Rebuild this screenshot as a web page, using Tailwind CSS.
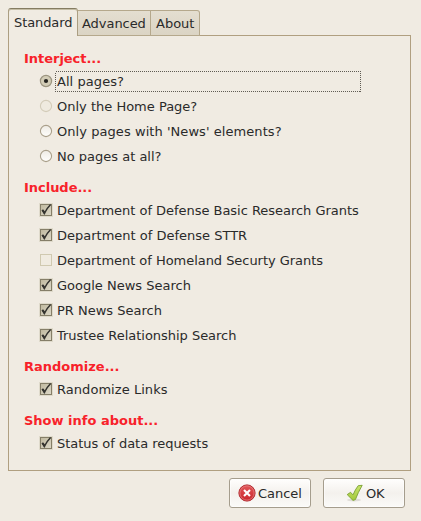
<!DOCTYPE html>
<html lang="en">
<head>
<meta charset="utf-8">
<title>Options</title>
<script src="https://cdn.jsdelivr.net/npm/@tailwindcss/browser@4"></script>
</head>
<body class="w-[421px] h-[521px] overflow-hidden bg-[#f0ebe2] font-['DejaVu_Sans',sans-serif] text-[13px] text-[#2a2a2a] pt-2 pl-2">
<svg class="absolute w-0 h-0">
  <defs>
    <linearGradient id="boxfill" x1="0" y1="0" x2="1" y2="1"><stop offset="0" stop-color="#bfb89e"/><stop offset="1" stop-color="#ddd8c8"/></linearGradient>
    <linearGradient id="dotfill" x1="0" y1="0" x2="0" y2="1"><stop offset="0" stop-color="#eeebe4"/><stop offset="1" stop-color="#fffefc"/></linearGradient>
    <linearGradient id="redfill" x1="0" y1="0" x2="0" y2="1"><stop offset="0" stop-color="#e2585b"/><stop offset="1" stop-color="#c9262c"/></linearGradient>
    <linearGradient id="greenfill" x1="0" y1="0" x2="0" y2="1"><stop offset="0" stop-color="#c8e46c"/><stop offset="1" stop-color="#a3c93a"/></linearGradient>
    <symbol id="checked" viewBox="0 0 14 14">
      <rect x=".5" y=".5" width="13" height="13" fill="none" stroke="#dfdacb"/>
      <rect x="1.5" y="1.5" width="11" height="11" fill="url(#boxfill)" stroke="#857e68"/>
      <path d="M3.2 7 L5.6 10 Q7.6 5.8 11.6 1.6" fill="none" stroke="#33322e" stroke-width="1.5"/>
      <path d="M2.6 7.3 L4.4 6.5 L6.2 8.9 L6 11.6 L5 11.6 Z" fill="#33322e"/>
    </symbol>
    <symbol id="unchecked" viewBox="0 0 14 14"><rect x="1.5" y="1.5" width="11" height="11" fill="#f0ebe0" stroke="#d0c9b0"/></symbol>
    <symbol id="radio-on" viewBox="0 0 14 14"><circle cx="7" cy="7" r="5.6" fill="#d2ccb6" stroke="#9c9580" stroke-width="1.2"/><circle cx="7" cy="7" r="2.1" fill="#24231f"/></symbol>
    <symbol id="radio-off" viewBox="0 0 14 14"><circle cx="7" cy="7" r="5.6" fill="url(#dotfill)" stroke="#aaa08b" stroke-width="1.1"/></symbol>
    <symbol id="radio-dim" viewBox="0 0 14 14"><circle cx="7" cy="7" r="5.6" fill="#efeadf" stroke="#d3ccb9" stroke-width="1.1"/></symbol>
  </defs>
</svg>

<div class="relative z-10 flex items-end h-7 -mb-px">
  <div class="w-[70px] h-7 rounded-t-[3px] border border-b-0 border-[#ab9e82] border-t-[#857c62] bg-[#f0ebe2] shadow-[inset_0_1px_0_#c5bda5] pl-[5px] leading-[27px] tracking-[-0.1px]">Standard</div>
  <div class="w-[73px] h-[26px] border border-l-0 border-[#b5a88c] bg-linear-to-b from-[#e4ded0] to-[#dbd4c4] pl-1 leading-[26px] tracking-[-0.05px]">Advanced</div>
  <div class="w-[49px] h-[26px] rounded-tr-[3px] border border-l-0 border-[#b5a88c] bg-linear-to-b from-[#e4ded0] to-[#dbd4c4] pl-[5px] leading-[26px]">About</div>
</div>

<main class="w-[403px] h-[436px] border border-[#b09f80] pl-[15px] pt-3">
  <h2 class="h-[21px] leading-[21px] font-bold text-[#f8222a] tracking-[-0.03px]">Interject...</h2>
  <div class="pl-[15px]">
    <div class="flex items-center h-[25px]"><svg class="w-[14px] h-[14px] mr-[2px] mb-px"><use href="#radio-on"/></svg>
      <div class="relative w-[306px] h-[21px] leading-[22px] pl-0.5 tracking-[0.06px]">All pages?
        <svg class="absolute inset-0 w-[306px] h-[21px]"><rect x=".5" y=".5" width="305" height="20" fill="none" stroke="#5f5b53" stroke-dasharray="1 1" shape-rendering="crispEdges"/></svg>
      </div></div>
    <div class="flex items-center h-[25px] gap-1"><svg class="w-[14px] h-[14px] mb-px"><use href="#radio-dim"/></svg>Only the Home Page?</div>
    <div class="flex items-center h-[25px] gap-1 tracking-[0.06px]"><svg class="w-[14px] h-[14px] mb-px"><use href="#radio-off"/></svg>Only pages with 'News' elements?</div>
    <div class="flex items-center h-[25px] gap-1"><svg class="w-[14px] h-[14px] mb-px"><use href="#radio-off"/></svg>No pages at all?</div>
  </div>
  <h2 class="mt-2 h-[21px] leading-[21px] font-bold text-[#f8222a] tracking-[-0.03px]">Include...</h2>
  <div class="pl-[15px]">
    <div class="flex items-center h-[25px] gap-1 tracking-[-0.03px]"><svg class="w-[14px] h-[14px] mb-px"><use href="#checked"/></svg>Department of Defense Basic Research Grants</div>
    <div class="flex items-center h-[25px] gap-1"><svg class="w-[14px] h-[14px] mb-px"><use href="#checked"/></svg>Department of Defense STTR</div>
    <div class="flex items-center h-[25px] gap-1 tracking-[-0.04px]"><svg class="w-[14px] h-[14px] mb-px"><use href="#unchecked"/></svg>Department of Homeland Securty Grants</div>
    <div class="flex items-center h-[25px] gap-1"><svg class="w-[14px] h-[14px] mb-px"><use href="#checked"/></svg>Google News Search</div>
    <div class="flex items-center h-[25px] gap-1"><svg class="w-[14px] h-[14px] mb-px"><use href="#checked"/></svg>PR News Search</div>
    <div class="flex items-center h-[25px] gap-1 tracking-[-0.03px]"><svg class="w-[14px] h-[14px] mb-px"><use href="#checked"/></svg>Trustee Relationship Search</div>
  </div>
  <h2 class="mt-2 h-[21px] leading-[21px] font-bold text-[#f8222a]">Randomize...</h2>
  <div class="pl-[15px]">
    <div class="flex items-center h-[25px] gap-1 tracking-[0.05px]"><svg class="w-[14px] h-[14px] mb-px"><use href="#checked"/></svg>Randomize Links</div>
  </div>
  <h2 class="mt-2 h-[21px] leading-[21px] font-bold text-[#f8222a]">Show info about...</h2>
  <div class="pl-[15px]">
    <div class="flex items-center h-[25px] gap-1 tracking-[-0.03px]"><svg class="w-[14px] h-[14px] mb-px"><use href="#checked"/></svg>Status of data requests</div>
  </div>
</main>

<div class="flex justify-end gap-3 pt-[7px] pr-4">
  <button class="flex items-center w-[82px] h-[30px] rounded-[3px] border border-[#a59d8d] shadow-[inset_0_0_0_1px_#fff8] bg-linear-to-b from-[#fffefd] from-0% via-[#f4f1ed] via-50% to-[#fbfaf8] pl-2 gap-[2px] tracking-[-0.03px]">
    <svg class="w-[18px] h-[18px]" viewBox="0 0 18 18"><circle cx="9" cy="9" r="8.1" fill="url(#redfill)" stroke="#b02a30"/><circle cx="9" cy="9" r="7.1" fill="none" stroke="#ea8484" stroke-width=".7"/><path d="M6 6 L12 12 M12 6 L6 12" stroke="#fff" stroke-width="2.1"/></svg>
    <span class="leading-[20px] pt-px">Cancel</span>
  </button>
  <button class="flex items-center w-[82px] h-[30px] rounded-[3px] border border-[#a59d8d] shadow-[inset_0_0_0_1px_#fff8] bg-linear-to-b from-[#fffefd] from-0% via-[#f4f1ed] via-50% to-[#fbfaf8] pl-[22px] gap-[2px] tracking-[-0.2px]">
    <svg class="w-[18px] h-[18px]" viewBox="0 0 18 18"><ellipse cx="8" cy="16" rx="7" ry="1.4" fill="#55503f" opacity=".15"/><path d="M1.2 10.6 L4.6 8.3 L7 10.9 Q9.2 5.5 12.2 1.7 L16.2 1.3 Q12 8.5 9.4 15.6 L7 16.4 Z" fill="url(#greenfill)" stroke="#7ba032" stroke-width=".9" stroke-linejoin="round"/></svg>
    <span class="leading-[20px] pt-px">OK</span>
  </button>
</div>
</body>
</html>
